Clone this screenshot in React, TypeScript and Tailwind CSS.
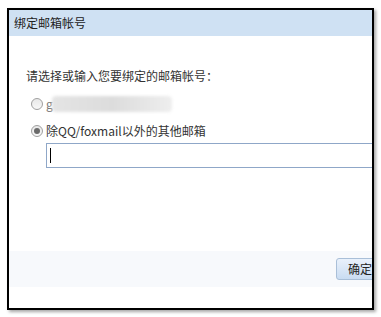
export default function App() {
  const font = { fontFamily: '"Microsoft YaHei", "Noto Sans CJK SC", "Noto Sans", sans-serif' };
  return (
    <div className="w-[381px] h-[317px] bg-white pt-[8px] pl-[7px]" style={font}>
      <div className="w-[367px] h-[302px] border-2 border-black shadow-[2px_2px_3px_rgba(0,0,0,0.35)] overflow-hidden bg-white flex flex-col">
        <div className="h-[26px] shrink-0 bg-[#cfe1f3] flex items-center pl-[5px] text-[12px] text-[#222]">
          绑定邮箱帐号
        </div>
        <div className="w-[420px] flex flex-col text-[12px] text-[#333]">
          <div className="pl-[17px] mt-[31px] h-[17px] flex items-center">请选择或输入您要绑定的邮箱帐号：</div>
          <div className="pl-[22px] mt-[11px] h-[17px] flex items-center gap-[3px]">
            <Radio checked={false} />
            <span className="text-[#777]">g</span>
            <span className="-ml-[4px] w-[120px] h-[16px] bg-gradient-to-r from-[#e4e4e4] via-[#dcdcdc] to-[#eeeeee] blur-[1.5px] rounded-sm" />
          </div>
          <div className="pl-[22px] mt-[10px] h-[17px] flex items-center gap-[3px]">
            <Radio checked />
            <span>除QQ/foxmail以外的其他邮箱</span>
          </div>
          <div className="pl-[37px] mt-[4px]">
            <div className="h-[25px] w-[360px] border border-[#8fa7c8] bg-white flex items-center pl-[3px]">
              <span className="w-px h-[15px] bg-black" />
            </div>
          </div>
        </div>
        <div className="mt-[83px] h-[36px] bg-[#f7f9fc] flex items-center pl-[327px] shrink-0">
          <button className="h-[22px] w-[60px] shrink-0 rounded-[3px] border border-[#a9bfd8] bg-gradient-to-b from-[#e9f1fb] to-[#c9dcf2] text-[12px] text-[#222] text-left pl-[11px]">
            确定
          </button>
        </div>
      </div>
    </div>
  );
}

function Radio({ checked }: { checked: boolean }) {
  return (
    <span className="w-[12px] h-[12px] rounded-full border border-[#a0a0a0] bg-gradient-to-b from-[#e8e8e8] to-[#f8f8f8] flex items-center justify-center shrink-0">
      {checked && <span className="w-[6px] h-[6px] rounded-full bg-[#6a6a6a]" />}
    </span>
  );
}
